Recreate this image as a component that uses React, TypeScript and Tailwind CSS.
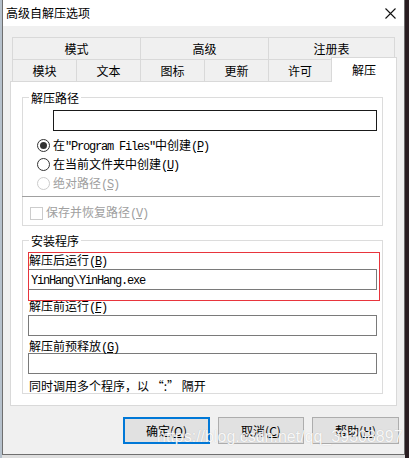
import type { ReactNode } from 'react'
import clsx from 'clsx'

// half-width latin text, SimSun style: 6px per glyph
function H({ children }: { children: ReactNode }) {
  return <span className="font-['Liberation_Mono',monospace] tracking-[-1.2px]">{children}</span>
}

function Key({ k }: { k: string }) {
  return (
    <H>
      (<span className="underline underline-offset-[1px]">{k}</span>)
    </H>
  )
}

function Radio({ checked, disabled, children }: { checked?: boolean; disabled?: boolean; children: ReactNode }) {
  return (
    <div className="ml-[14px] flex h-[19px] items-center">
      <span
        className={clsx(
          'flex h-[13px] w-[13px] items-center justify-center rounded-full border bg-white',
          disabled ? 'border-[#cccccc]' : 'border-[#333333]',
        )}
      >
        {checked && <span className="h-[7px] w-[7px] rounded-full bg-[#333333]" />}
      </span>
      <span className={clsx('ml-[3px] leading-[14px]', disabled ? 'text-[#a0a0a0]' : 'text-black')}>{children}</span>
    </div>
  )
}

function Field({ value }: { value?: string }) {
  return (
    <div className="ml-[5px] flex h-[21px] w-[349px] items-center border border-[#7a7a7a] bg-white pl-[2px]">
      {value && (
        <span className="leading-[14px]">
          <H>{value}</H>
        </span>
      )}
    </div>
  )
}

const topTabs = [
  { label: '模式', w: 'w-[128px]' },
  { label: '高级', w: 'w-[128px]' },
  { label: '注册表', w: 'w-[127px]' },
]

const bottomTabs = [
  { label: '模块', w: 'w-[64px]' },
  { label: '文本', w: 'w-[64px]' },
  { label: '图标', w: 'w-[64px]' },
  { label: '更新', w: 'w-[64px]' },
  { label: '许可', w: 'w-[63px]' },
]

export default function App() {
  return (
    <div className="flex h-[458px] w-[409px] overflow-hidden bg-[#1e1c2a] font-['Noto_Sans_CJK_SC',sans-serif] text-[12px] text-black">
      <div className="h-full w-[2px] bg-[#b6c1cc]" />
      <div className="flex h-full w-[403px] flex-col bg-[#dedede]">
        <div className="flex h-[455px] flex-col border-x border-b border-[#6f6f6f] bg-[#f0f0f0]">
          {/* title bar */}
          <div className="flex h-[26px] items-center justify-between bg-white pl-[3px] pr-[8px]">
            <span className="leading-[16px]">高级自解压选项</span>
            <svg width="11" height="11" viewBox="0 0 11 11" className="mt-[1px]">
              <path d="M0.5 0.5 L10.5 10.5 M10.5 0.5 L0.5 10.5" stroke="#111" strokeWidth="1.1" />
            </svg>
          </div>

          <div className="pt-[11px]">
            {/* tabs */}
            <div className="ml-[9px] w-[385px]">
              <div className="flex h-[22px]">
                {topTabs.map((t, i) => (
                  <div
                    key={t.label}
                    className={clsx(
                      'flex items-center justify-center border-l border-t border-[#d9d9d9] leading-[14px]',
                      t.w,
                      i === topTabs.length - 1 && 'border-r',
                    )}
                  >
                    {t.label}
                  </div>
                ))}
              </div>
              <div className="flex h-[22px] items-start">
                {bottomTabs.map((t) => (
                  <div
                    key={t.label}
                    className={clsx(
                      'flex h-[22px] items-center justify-center border-l border-t border-[#d9d9d9] leading-[14px]',
                      t.w,
                    )}
                  >
                    {t.label}
                  </div>
                ))}
                <div className="relative z-10 -mt-[2px] flex h-[25px] w-[66px] items-start justify-center border-x border-t border-[#d9d9d9] bg-white pt-[5px] leading-[14px]">
                  解压
                </div>
              </div>
            </div>

            {/* panel */}
            <div className="ml-[7px] h-[325px] w-[387px] border border-[#d9d9d9] bg-white pt-[8px]">
              <fieldset className="ml-[11px] w-[361px] border border-[#dcdcdc]">
                <legend className="ml-[6px] px-[2px] leading-[15px]">解压路径</legend>
                <div className="ml-[30px] mt-[5px] h-[21px] w-[324px] border border-[#1a1a1a] bg-white" />
                <div className="mt-[5px]">
                  <Radio checked>
                    在<H>"Program Files"</H>中创建<Key k="P" />
                  </Radio>
                  <Radio>
                    在当前文件夹中创建<Key k="U" />
                  </Radio>
                  <Radio disabled>
                    绝对路径<Key k="S" />
                  </Radio>
                </div>
                <div className="-ml-px mt-[3px] h-px w-[358px] bg-[#a0a0a0]" />
                <div className="flex items-center pb-[4px] pt-[8px]">
                  <span className="ml-[7px] h-[13px] w-[13px] border border-[#cccccc] bg-white" />
                  <span className="ml-[3px] leading-[14px] text-[#a0a0a0]">
                    保存并恢复路径<Key k="V" />
                  </span>
                </div>
              </fieldset>

              <fieldset className="ml-[11px] mt-[7px] w-[361px] border border-[#dcdcdc]">
                <legend className="ml-[6px] px-[2px] leading-[15px]">安装程序</legend>
                <div className="relative mt-[5px]">
                  <div className="ml-[6px] h-[14px] leading-[14px]">
                    解压后运行<Key k="B" />
                  </div>
                  <div className="mt-[2px]">
                    <Field value="YinHang\YinHang.exe" />
                  </div>
                  <div className="pointer-events-none absolute left-[5px] top-[-1px] z-10 h-[49px] w-[352px] border border-[#e8353d]" />
                </div>
                <div className="ml-[6px] mt-[9px] h-[14px] leading-[14px]">
                  解压前运行<Key k="F" />
                </div>
                <div className="mt-[2px]">
                  <Field />
                </div>
                <div className="ml-[6px] mt-[3px] h-[14px] leading-[14px]">
                  解压前预释放<Key k="G" />
                </div>
                <Field />
                <div className="ml-[6px] mt-[5px] h-[14px] leading-[14px]">同时调用多个程序，以 “:” 隔开</div>
              </fieldset>
            </div>

            {/* buttons */}
            <div className="relative ml-[120px] mt-[11px] flex h-[27px] gap-[8px]">
              <button className="flex h-[27px] w-[87px] items-center justify-center border-2 border-[#0078d7] bg-[#e1e1e1] leading-[14px]">
                确定(<span className="underline underline-offset-[1px]">O</span>)
              </button>
              <button className="flex h-[27px] w-[86px] items-center justify-center border border-[#adadad] bg-[#e1e1e1] leading-[14px]">
                取消(<span className="underline underline-offset-[1px]">C</span>)
              </button>
              <button className="flex h-[27px] w-[87px] items-center justify-center border border-[#adadad] bg-[#e1e1e1] leading-[14px]">
                帮助(<span className="underline underline-offset-[1px]">H</span>)
              </button>
              <span className="pointer-events-none absolute left-[34px] top-[11px] whitespace-nowrap font-['Liberation_Sans',sans-serif] text-[16px] leading-[18px] text-white/90 [text-shadow:0_0_1px_rgba(0,0,0,0.22)]">
                https://blog.csdn.net/qq_39308897
              </span>
            </div>
          </div>
        </div>
      </div>
      <div className="h-full flex-1 bg-[#2a1e22]" />
    </div>
  )
}
